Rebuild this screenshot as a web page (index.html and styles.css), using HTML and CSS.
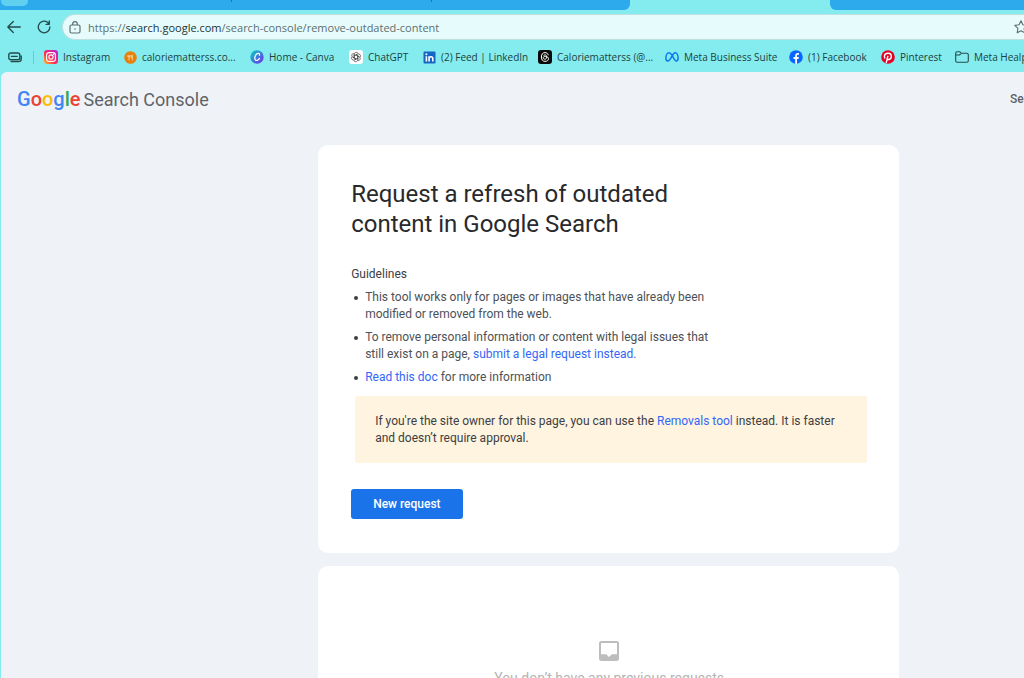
FILE: index.html
```html
<!DOCTYPE html>
<html lang="en">
<head>
    <meta charset="UTF-8">
    <meta name="viewport" content="width=device-width, initial-scale=1.0">
    <title>Refresh Outdated Content</title>
    <link rel="stylesheet" href="styles.css">
</head>
<body>

    <div class="browser">
        <div class="tab-strip">
            <div class="tabs-left">
                <span class="tab-button"></span>
                <span class="tab-line"></span>
                <span class="tab-line"></span>
            </div>
            <div class="tab-active"></div>
            <div class="tabs-right"></div>
        </div>

        <div class="toolbar">
            <button class="icon-button" aria-label="Back">
                <svg width="14" height="14" viewBox="0 0 14 14" fill="none" stroke="#244a4c" stroke-width="1.3" stroke-linecap="round" stroke-linejoin="round"><path d="M13.3 7H.8M6.3 1.5.8 7l5.5 5.5"/></svg>
            </button>
            <button class="icon-button" aria-label="Refresh">
                <svg width="14" height="14" viewBox="0 0 14 14" fill="none" stroke="#244a4c" stroke-width="1.3" stroke-linecap="round" stroke-linejoin="round"><path d="M12.9 7A5.8 5.8 0 1 1 10.500 2.300L12 4M12.300 1v3.300H9"/></svg>
            </button>
            <div class="address-bar">
                <svg width="12" height="13" viewBox="0 0 12 13" fill="none" stroke="#5d6f70" stroke-width="1.2"><rect x="1" y="4" width="10" height="8" rx="1.5"/><path d="M3.700 4V3a2.300 2.300 0 0 1 4.600 0v1"/><circle cx="6" cy="8" r=".8" fill="#5d6f70" stroke="none"/></svg>
                <span class="url">https://<span class="host">search.google.com</span>/search-console/remove-outdated-content</span>
                <svg class="star" width="14" height="14" viewBox="0 0 14 14" fill="none" stroke="#5d6f70" stroke-width="1.1" stroke-linejoin="round"><path d="m7 .8 1.900 4 4.300.6-3.100 3 .7 4.400L7 10.700l-3.800 2.100.7-4.400-3.100-3 4.300-.6z"/></svg>
            </div>
        </div>

        <nav class="bookmarks">
            <button class="icon-button" aria-label="Workspaces">
                <svg width="14" height="11" viewBox="0 0 14 11" fill="none" stroke="#244a4c" stroke-width="1.4"><rect x=".8" y="1" width="11" height="6.800" rx="2"/><path d="M3.500 4.400h5.600M3 9.600h7.500c1.600 0 2.700-1 2.700-2.600V4" stroke-linecap="round"/></svg>
            </button>
            <a href="#" class="bookmark">
                <svg width="14" height="14" viewBox="0 0 14 14"><defs><linearGradient id="insta" x1="0" y1="1" x2="1" y2="0"><stop offset="0" stop-color="#ffc425"/><stop offset=".4" stop-color="#ff2e52"/><stop offset="1" stop-color="#b321e8"/></linearGradient></defs><rect width="14" height="14" rx="3" fill="url(#insta)"/><g fill="none" stroke="#fff" stroke-width="1.1"><rect x="2.600" y="2.600" width="8.800" height="8.800" rx="2.500"/><circle cx="7" cy="7" r="2.100"/></g><circle cx="9.600" cy="4.400" r=".6" fill="#fff"/></svg>
                <span>Instagram</span>
            </a>
            <a href="#" class="bookmark">
                <svg width="13" height="13" viewBox="0 0 13 13"><circle cx="6.500" cy="6.500" r="6.300" fill="#e8800c"/><path d="M3.900 4v1.800h2.200V4M5 4v5.300M8.300 9.300V4c-1 .4-1.200 1.900-.9 2.700h.9" fill="none" stroke="#ffe0b0" stroke-width=".8"/></svg>
                <span>caloriematterss.co...</span>
            </a>
            <a href="#" class="bookmark">
                <svg width="14" height="14" viewBox="0 0 14 14"><defs><linearGradient id="canva" x1="0" y1="0" x2="1" y2="1"><stop offset=".15" stop-color="#10bdca"/><stop offset=".55" stop-color="#4175df"/><stop offset="1" stop-color="#7d25e8"/></linearGradient></defs><circle cx="7" cy="7" r="6.700" fill="url(#canva)"/><path d="M9.500 5.200c.3-1.900-1.400-2.500-2.900-1.200-1.800 1.500-2.400 4.600-1.200 5.900 1.200 1.100 3.100.3 4.100-1.500" fill="none" stroke="#fff" stroke-width="1.3" stroke-linecap="round"/></svg>
                <span>Home - Canva</span>
            </a>
            <a href="#" class="bookmark">
                <svg width="14" height="14" viewBox="0 0 14 14"><defs><path id="petal" d="M5.200 7.900V4.200a2.100 2.100 0 0 1 3.900-.9M5.200 5.900l3.300-1.900"/></defs><rect width="14" height="14" rx="3" fill="#fff"/><g fill="none" stroke="#333" stroke-width=".6"><use href="#petal"/><use href="#petal" transform="rotate(60 7 7)"/><use href="#petal" transform="rotate(120 7 7)"/><use href="#petal" transform="rotate(180 7 7)"/><use href="#petal" transform="rotate(240 7 7)"/><use href="#petal" transform="rotate(300 7 7)"/></g></svg>
                <span>ChatGPT</span>
            </a>
            <a href="#" class="bookmark">
                <svg width="13" height="13" viewBox="0 0 13 13"><rect x=".5" y=".5" width="12" height="12" rx="1" fill="#1666c5"/><g stroke="#fff" stroke-width="1.6" fill="none"><path d="M3.400 5.200v5.200M6.100 10.400V5.200M6.100 7.500c0-2.200 3.700-2.400 3.700.2v2.700"/></g><circle cx="3.400" cy="3.200" r="1" fill="#fff"/></svg>
                <span>(2) Feed | LinkedIn</span>
            </a>
            <a href="#" class="bookmark">
                <svg width="14" height="14" viewBox="0 0 14 14"><rect width="14" height="14" rx="3" fill="#0a0a0a"/><path d="M10.300 5.200C9.900 3.500 8.700 2.600 7 2.600 4.600 2.600 3.400 4.300 3.400 7s1.200 4.400 3.600 4.400c2 0 3.500-1.100 3.500-2.600 0-1.400-1.300-2.300-3.100-2.300-1.400 0-2.200.6-2.200 1.400 0 .8.700 1.300 1.600 1.300 1.300 0 1.900-.9 1.900-2.200 0-1.400-.6-2.100-1.700-2.100-.7 0-1.200.3-1.500.8" fill="none" stroke="#fff" stroke-width="1"/></svg>
                <span>Caloriematterss (@...</span>
            </a>
            <a href="#" class="bookmark">
                <svg width="14" height="14" viewBox="0 0 14 14"><path d="M7 5.200C5.900 3.500 5.100 2.700 4 2.700 2.200 2.700.9 5.300.9 8c0 1.900.7 3 1.900 3 1.300 0 2-1 4.200-4.900 1.200-2.200 1.900-3.400 3.100-3.400 1.700 0 3 2.600 3 5.300 0 1.900-.7 3-1.900 3C9.900 11 9.200 9.300 7 5.200" fill="none" stroke="#0877f2" stroke-width="1.5"/></svg>
                <span>Meta Business Suite</span>
            </a>
            <a href="#" class="bookmark">
                <svg width="14" height="14" viewBox="0 0 14 14"><circle cx="7" cy="7" r="6.800" fill="#0b66ff"/><path d="M6.200 13.800V9H4.500V7h1.700V5.700c0-1.900 1-2.800 2.600-2.800.5 0 .9 0 1.200.1v1.800H9c-.8 0-1 .4-1 1.100V7h1.900l-.4 2H8v4.700z" fill="#fff"/></svg>
                <span>(1) Facebook</span>
            </a>
            <a href="#" class="bookmark">
                <svg width="14" height="14" viewBox="0 0 14 14"><circle cx="7" cy="7" r="6.800" fill="#e60023"/><path d="M5.200 13 6.900 5.800M6.300 8.800c.4.600 1 .8 1.600.7 1.500-.2 2.500-1.800 2.400-3.500C10.200 4.300 9 3.300 7.100 3.300c-2.200 0-3.700 1.500-3.700 3.300 0 .8.300 1.500.9 1.800" fill="none" stroke="#fff" stroke-width="1.4"/></svg>
                <span>Pinterest</span>
            </a>
            <a href="#" class="bookmark">
                <svg width="14" height="14" viewBox="0 0 14 14" fill="none" stroke="#244a4c" stroke-width="1.1"><path d="M.7 3.200c0-.9.600-1.500 1.500-1.500h2.600l1.500 1.600h5.500c.9 0 1.500.6 1.500 1.500v6c0 .9-.6 1.500-1.500 1.500H2.200c-.9 0-1.500-.6-1.500-1.500zM.7 5h3.800l1.800-1.700"/></svg>
                <span>Meta Healper</span>
            </a>
        </nav>
    </div>

    <div class="page">
        <header class="header">
            <a href="#" class="logo">
                <span class="google"><span class="blue">G</span><span class="red">o</span><span class="yellow">o</span><span class="blue">g</span><span class="green">l</span><span class="red">e</span></span>
                <span class="product">Search Console</span>
            </a>
            <a href="#" class="header-link">Search</a>
        </header>

        <main class="content">
            <section class="card">
                <h1>Request a refresh of outdated content in Google Search</h1>
                <h2>Guidelines</h2>
                <ul class="guidelines">
                    <li>This tool works only for pages or images that have already been modified or removed from the web.</li>
                    <li>To remove personal information or content with legal issues that still exist on a page, <a href="#">submit a legal request instead.</a></li>
                    <li><a href="#">Read this doc</a> for more information</li>
                </ul>
                <p class="notice">If you're the site owner for this page, you can use the <a href="#">Removals tool</a> instead. It is faster and doesn’t require approval.</p>
                <button class="new-request">New request</button>
            </section>

            <section class="card empty">
                <svg width="20" height="20" viewBox="3 3 18 18" fill="#bdbdbd"><path d="M19 3H5c-1.100 0-2 .9-2 2v14c0 1.100.9 2 2 2h14c1.100 0 2-.9 2-2V5c0-1.100-.9-2-2-2zm.2 12h-4.700L12 17.300 9.500 15H4.800V5c0-.2.100-.3.300-.3h13.800c.2 0 .3.100.3.300z"/></svg>
                <p>You don’t have any previous requests</p>
            </section>
        </main>
    </div>

</body>
</html>
```

FILE: styles.css
```css
* {
    box-sizing: border-box;
}
body {
    margin: 0;
    height: 100vh;
    overflow: hidden;
    display: flex;
    flex-direction: column;
    background-color: #84ecee;
    font-family: Roboto, Arial, sans-serif;
    color: #28292c;
}
a {
    color: #3367f6;
    text-decoration: none;
}
button {
    font-family: inherit;
    border: none;
    cursor: pointer;
}
svg {
    flex: none;
}

/* Browser bars */
.browser {
    font-family: "Open Sans", "Segoe UI", sans-serif;
}
.tab-strip {
    display: flex;
    height: 10px;
}
.tabs-left {
    flex: 630;
    display: flex;
    background-color: #2caaec;
    border-bottom-right-radius: 6px;
}
.tab-active {
    flex: 200;
}
.tabs-right {
    flex: 194;
    background-color: #2caaec;
    border-bottom-left-radius: 6px;
}
.tab-button {
    width: 27px;
    height: 6px;
    margin-left: 1px;
    background-color: #5fd0ef;
    border-radius: 0 0 5px 5px;
}
.tab-line {
    width: 1px;
    height: 2px;
    margin-left: 203px;
    background-color: #2377a8;
}
.tab-line + .tab-line {
    margin-left: 199px;
}
.toolbar {
    display: flex;
    align-items: center;
    height: 34px;
    padding-left: 7px;
    gap: 16px;
}
.icon-button {
    display: flex;
    padding: 0;
    background: none;
}
.address-bar {
    flex: 1;
    display: flex;
    align-items: center;
    gap: 7px;
    height: 26px;
    margin-left: -5px;
    padding-left: 6px;
    background-color: #e6fbfb;
    border: 1px solid #bfdfe0;
    border-right: none;
    border-radius: 13px 0 0 13px;
    overflow: hidden;
}
.url {
    flex: 1;
    font-size: 11px;
    color: #5d6f70;
    white-space: nowrap;
}
.host {
    color: #1d3334;
}
.star {
    margin-right: -4px;
}
.bookmarks {
    display: grid;
    grid-template-columns: 36px 80px 126px 99px 74px 115px 127px 124px 92px 74px 90px;
    align-items: center;
    height: 26px;
    padding-left: 8px;
    overflow: hidden;
}
.bookmarks .icon-button {
    height: 13px;
    margin-right: 10px;
    align-items: center;
    border-right: 1px solid #6fc7ca;
}
.bookmark {
    display: flex;
    align-items: center;
    gap: 5px;
    font-size: 10px;
    color: #1d3f41;
    white-space: nowrap;
}

/* Search Console page */
.page {
    flex: 1;
    margin: 2px 0 0 1px;
    background-color: #eff3f8;
    border-top-left-radius: 6px;
    overflow: hidden;
}
.header {
    display: flex;
    align-items: center;
    justify-content: space-between;
    height: 54px;
    padding-left: 16px;
}
.logo {
    display: flex;
    align-items: baseline;
    gap: 3px;
    white-space: nowrap;
    color: #5f6368;
}
.google {
    font-size: 20px;
    font-weight: 500;
}
.product {
    font-size: 18px;
}
.blue { color: #4285f4; }
.red { color: #ea4335; }
.yellow { color: #fbbc04; }
.green { color: #34a853; }
.header-link {
    width: 14px;
    overflow: hidden;
    font-size: 12px;
    font-weight: 500;
    color: #5f6368;
}
.content {
    max-width: 581px;
    margin: 19px 0 0 31%;
}
.card {
    margin-bottom: 13px;
    padding: 34px 32px 34px 33px;
    background-color: #fff;
    border-radius: 10px;
}
h1 {
    max-width: 360px;
    margin: 0 0 27px;
    font-size: 24px;
    font-weight: 400;
    line-height: 30px;
}
h2 {
    margin: 0;
    font-size: 12px;
    font-weight: 400;
    line-height: 17px;
    color: #3c4043;
}
.guidelines {
    max-width: 370px;
    margin: 6px 0 10px;
    padding-left: 14px;
    list-style: none;
    font-size: 12px;
    line-height: 17px;
    color: #4d5156;
}
.guidelines li {
    position: relative;
    margin-bottom: 6px;
}
.guidelines li::before {
    content: "";
    position: absolute;
    top: 7px;
    left: -11px;
    width: 4px;
    height: 4px;
    border-radius: 50%;
    background-color: #3c4043;
}
.notice {
    margin: 0 0 26px 4px;
    padding: 17px 16px 16px 20px;
    background-color: #fef4e0;
    border-radius: 3px;
    font-size: 12px;
    line-height: 17px;
    color: #3c4043;
}
.new-request {
    display: block;
    height: 30px;
    padding: 0 22px;
    background-color: #1a73e8;
    border-radius: 3px;
    font-size: 12px;
    font-weight: 500;
    color: #fff;
}
.empty {
    display: flex;
    flex-direction: column;
    align-items: center;
    padding-top: 75px;
}
.empty p {
    margin: 9px 0 0;
    font-size: 14px;
    line-height: 17px;
    color: #b4b4b4;
}
```
